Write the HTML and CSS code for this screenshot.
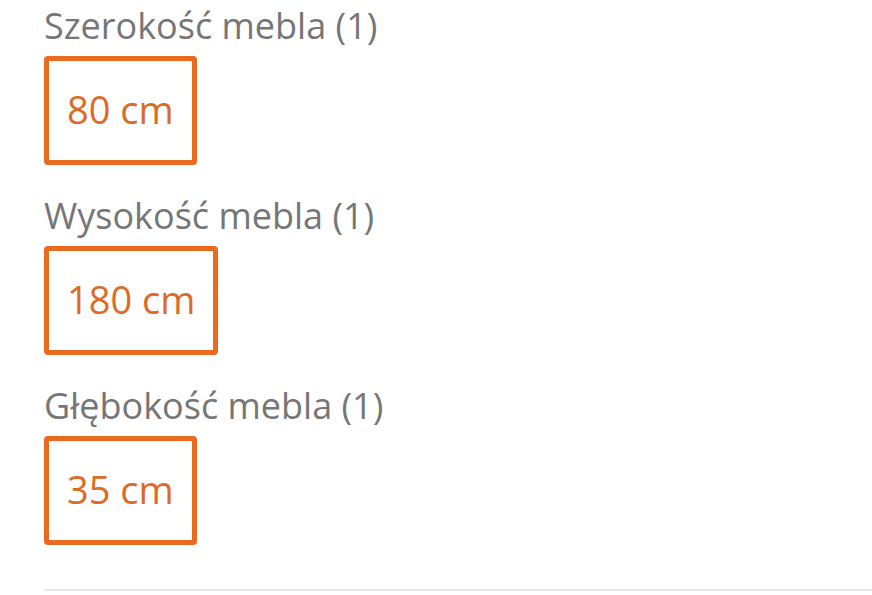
FILE: index.html
```html
<!DOCTYPE html>
<html lang="pl">
<head>
    <meta charset="UTF-8" />
    <meta name="viewport" content="width=device-width, initial-scale=1.0"/>
    <title>Wymiary mebla</title>
    <link rel="stylesheet" href="styles.css">
</head>
<body>
<div class="filters">
    <div class="filter">
        <div class="filter-label">Szerokość mebla (1)</div>
        <div class="chip">80 cm</div>
    </div>
    <div class="filter">
        <div class="filter-label">Wysokość mebla (1)</div>
        <div class="chip">180 cm</div>
    </div>
    <div class="filter">
        <div class="filter-label">Głębokość mebla (1)</div>
        <div class="chip">35 cm</div>
    </div>
    <hr class="divider">
</div>
</body>
</html>
```

FILE: styles.css
```css
/* -------------------- base -------------------- */
body{
    margin:0;padding:0;
    font-family:'Open Sans','Noto Sans',sans-serif;
    background:#fff;color:#757575;
}
.filters{padding:4px 0 0 44px}

/* -------------------- filter groups -------------------- */
.filter{margin-bottom:29px}
.filter-label{font-size:36px;line-height:44px;color:#767676;margin-bottom:8px}
.chip{
    display:inline-flex;align-items:center;box-sizing:border-box;
    height:109px;padding:0 18px 3px;
    border:5px solid #ea6a1f;border-radius:4px;
    font-size:38px;color:#dc6a28;
}

/* -------------------- divider -------------------- */
.divider{border:none;border-top:2px solid #e6e6e6;margin:44px 0 0}
```
